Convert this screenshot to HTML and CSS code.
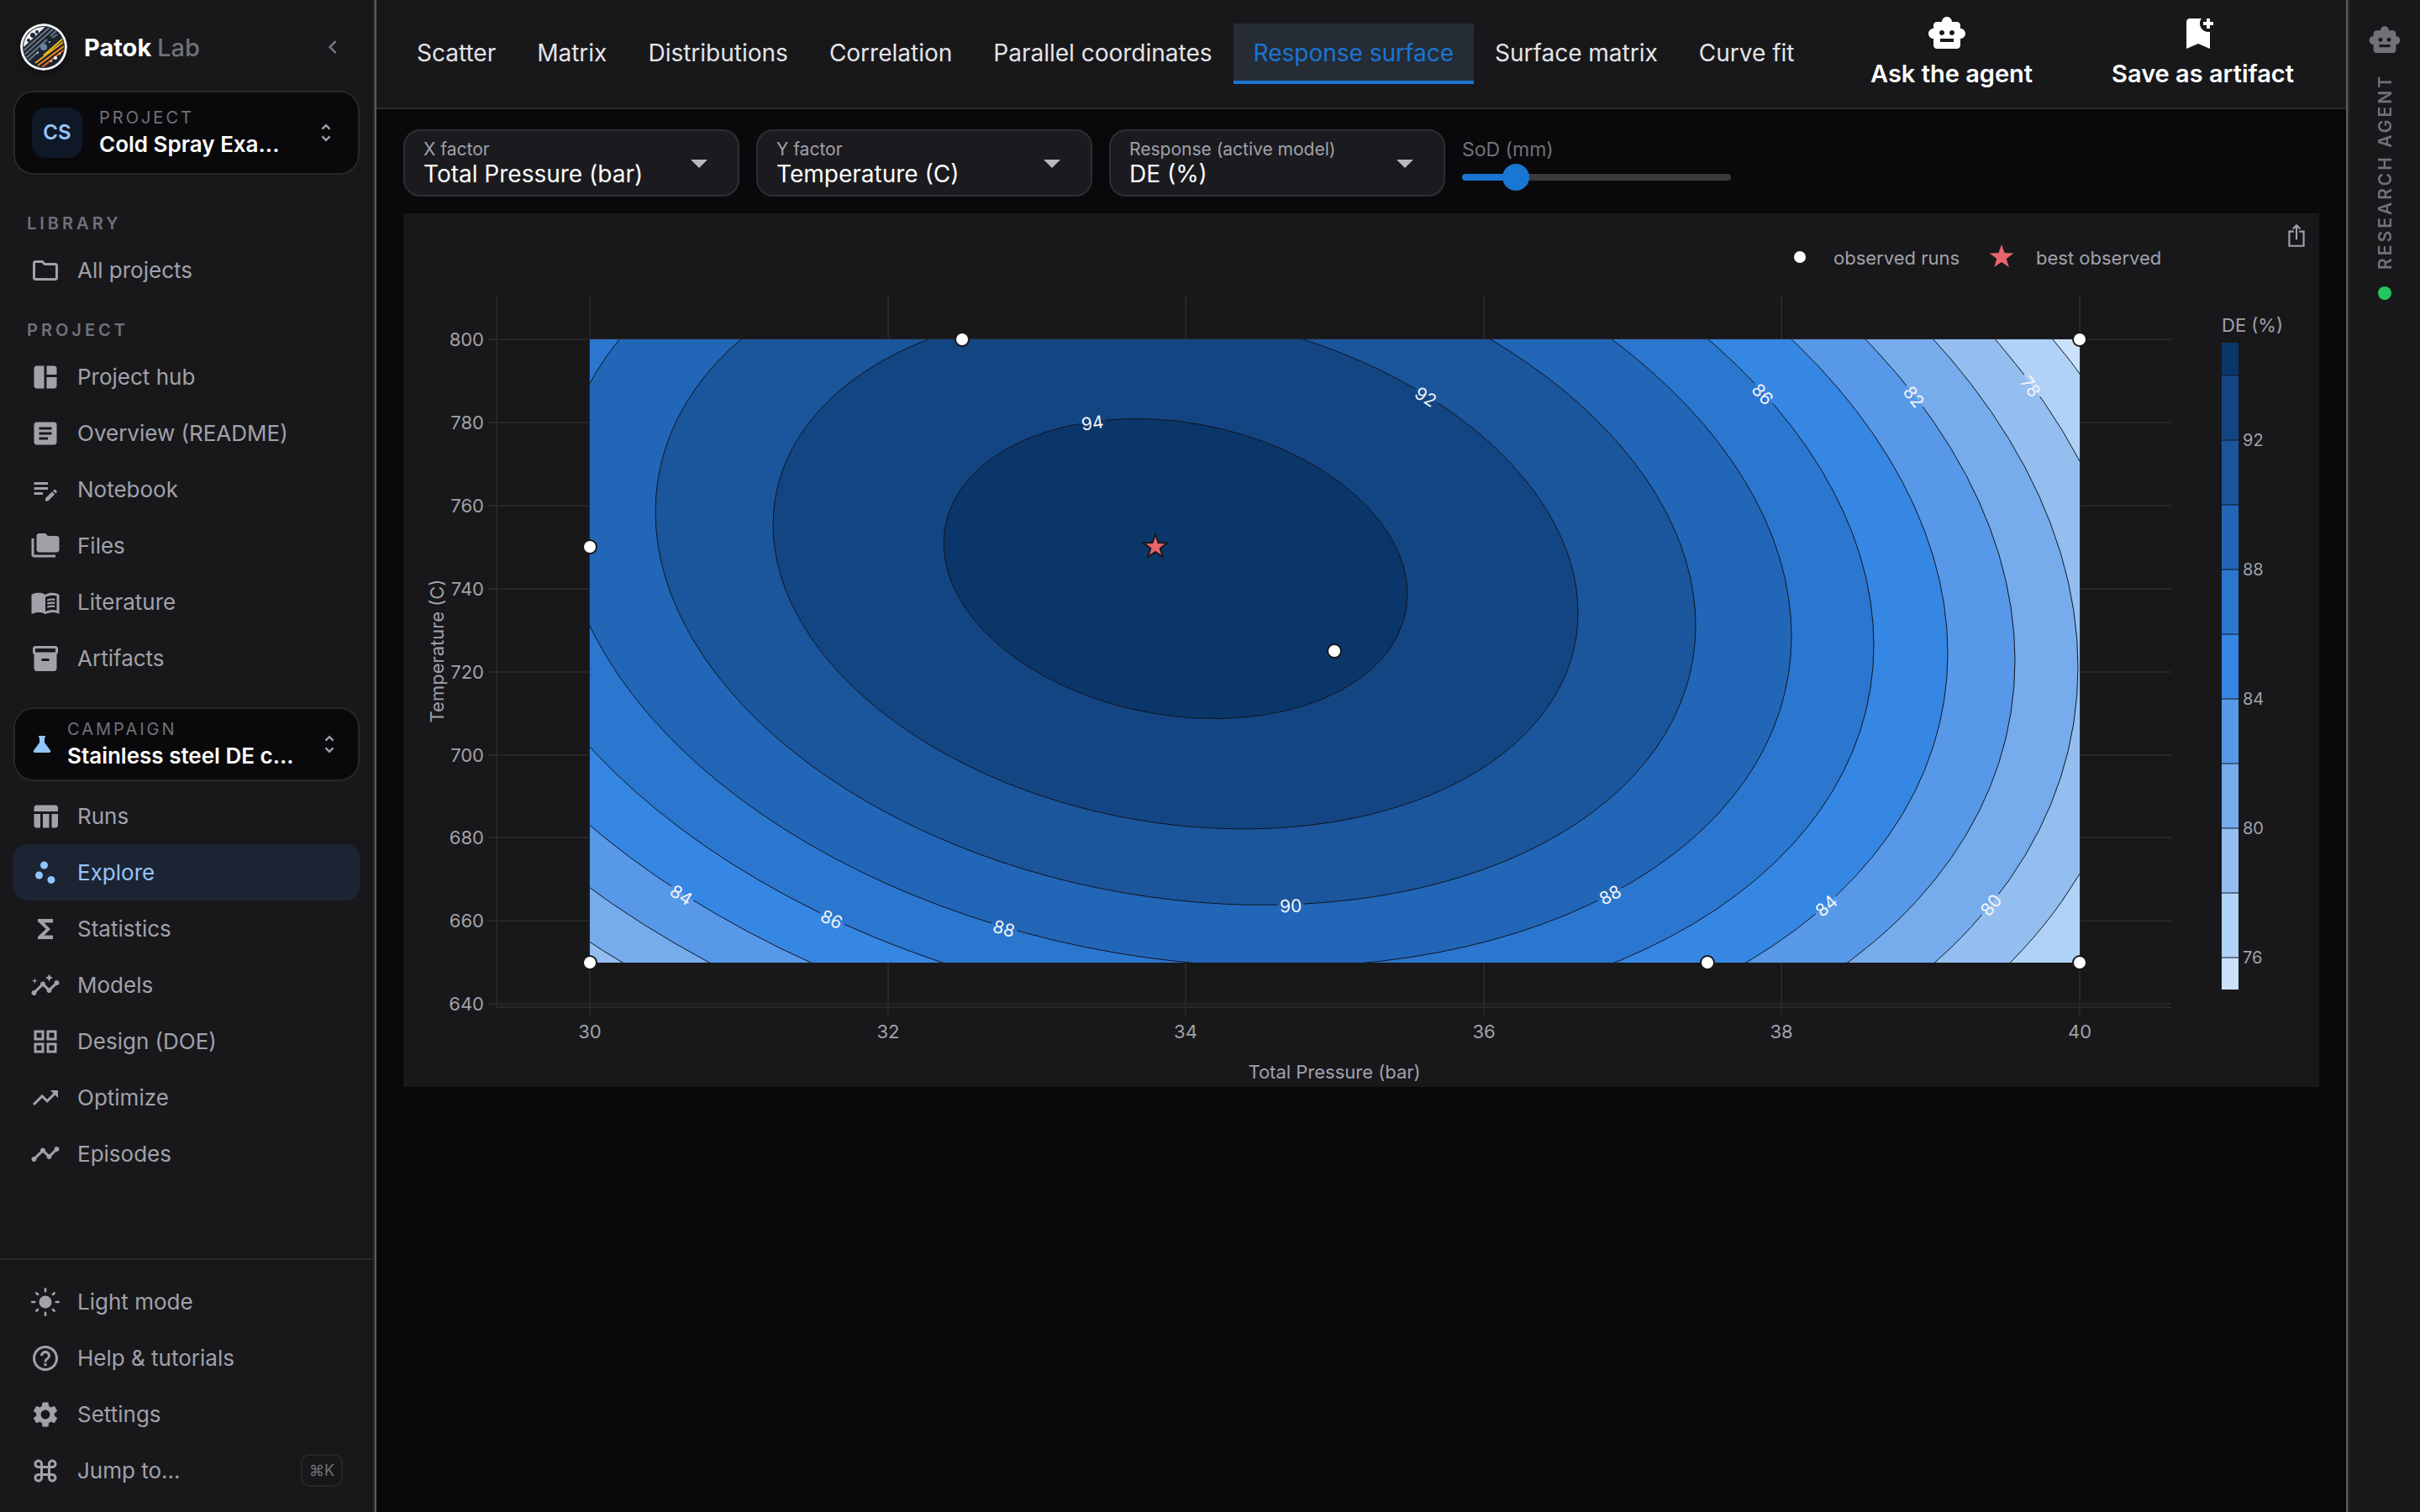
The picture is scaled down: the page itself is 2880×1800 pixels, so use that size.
FILE: index.html
```html
<!DOCTYPE html>
<html lang="en">
<head>
	<meta charset="UTF-8">
	<title>Patok Lab</title>
	<link rel="stylesheet" href="styles.css">
</head>
<body>
	<div class="app">
		<aside class="sidebar">
			<div class="brand">
				<svg class="logo" viewBox="0 0 56 56">
					<defs><clipPath id="logoClip"><circle cx="28" cy="28" r="24"/></clipPath></defs>
					<circle cx="28" cy="28" r="28" fill="#f4f4f5"/>
					<circle cx="28" cy="28" r="25" fill="#1c2430"/>
					<g clip-path="url(#logoClip)">
						<path d="M0 32 34 0H0z" fill="#f4f4f5"/>
						<circle cx="10" cy="20" r="2" fill="#1c2430"/>
						<circle cx="15" cy="14" r="3" fill="#1c2430"/>
						<circle cx="20" cy="10" r="2" fill="#1c2430"/>
						<path d="M2 34 38 2M4 38 42 4M6 42 32 19M36 15 46 6M10 44 22 33M38 17 44 13" stroke="#6b7583" stroke-width="2" fill="none"/>
						<path d="M28 38 52 17" stroke="#f2c21b" stroke-width="2"/>
						<path d="M18 47 54 20" stroke="#f5a623" stroke-width="2"/>
						<path d="M21 50 56 24" stroke="#f08a24" stroke-width="2"/>
						<path d="M26 52 54 30" stroke="#ea6a1f" stroke-width="2"/>
						<circle cx="28" cy="28" r="4" fill="#6b8299"/>
						<circle cx="35" cy="22" r="1" fill="#cfd6de"/>
						<circle cx="21" cy="35" r="1" fill="#cfd6de"/>
						<circle cx="42" cy="41" r="2" fill="#fff"/>
						<circle cx="37" cy="45" r="1" fill="#fff"/>
						<circle cx="47" cy="36" r="1" fill="#fff"/>
					</g>
				</svg>
				<span class="brand_name">Patok <span class="brand_sub">Lab</span></span>
				<button class="collapse" type="button" aria-label="Collapse sidebar">
					<svg viewBox="0 0 24 24"><path d="M15.41 7.41 14 6l-6 6 6 6 1.41-1.41L10.83 12z"/></svg>
				</button>
			</div>

			<button class="picker" type="button">
				<span class="avatar">CS</span>
				<span class="picker_text">
					<span class="picker_label">PROJECT</span>
					<span class="picker_name">Cold Spray Exa...</span>
				</span>
				<svg class="unfold" viewBox="0 0 24 24"><path d="M12 5.83 15.17 9l1.41-1.41L12 3 7.41 7.59 8.83 9 12 5.83zm0 12.34L8.83 15l-1.41 1.41L12 21l4.59-4.59L15.17 15 12 18.17z"/></svg>
			</button>

			<h2 class="section">LIBRARY</h2>
			<nav>
				<a class="item" href="#"><svg viewBox="0 0 24 24"><path d="M9.17 6l2 2H20v10H4V6h5.17M10 4H4c-1.1 0-1.99.9-1.99 2L2 18c0 1.1.9 2 2 2h16c1.1 0 2-.9 2-2V8c0-1.1-.9-2-2-2h-8l-2-2z"/></svg>All projects</a>
			</nav>

			<h2 class="section">PROJECT</h2>
			<nav>
				<a class="item" href="#"><svg viewBox="0 0 24 24"><path d="M11 21H5c-1.1 0-2-.9-2-2V5c0-1.1.9-2 2-2h6v18zm2 0h6c1.1 0 2-.9 2-2v-7h-8v9zm8-11V5c0-1.1-.9-2-2-2h-6v7h8z"/></svg>Project hub</a>
				<a class="item" href="#"><svg viewBox="0 0 24 24"><path d="M19 3H5c-1.1 0-2 .9-2 2v14c0 1.1.9 2 2 2h14c1.1 0 2-.9 2-2V5c0-1.1-.9-2-2-2zm-5 14H7v-2h7v2zm3-4H7v-2h10v2zm0-4H7V7h10v2z"/></svg>Overview (README)</a>
				<a class="item" href="#"><svg viewBox="0 0 24 24"><path d="M3 10h11v2H3v-2zm0-2h11V6H3v2zm0 8h7v-2H3v2zm15.01-3.13.71-.71c.39-.39 1.02-.39 1.41 0l.71.71c.39.39.39 1.02 0 1.41l-.71.71-2.12-2.12zm-.71.71-5.3 5.3V21h2.12l5.3-5.3-2.12-2.12z"/></svg>Notebook</a>
				<a class="item" href="#"><svg viewBox="0 0 24 24"><path d="M3 6H1v13c0 1.1.9 2 2 2h17v-2H3V6z"/><path d="M21 4h-7l-2-2H7c-1.1 0-1.99.9-1.99 2L5 15c0 1.1.9 2 2 2h14c1.1 0 2-.9 2-2V6c0-1.1-.9-2-2-2z"/></svg>Files</a>
				<a class="item" href="#"><svg viewBox="0 0 24 24"><path d="M21 5c-1.11-.35-2.33-.5-3.5-.5-1.95 0-4.05.4-5.5 1.5-1.45-1.1-3.55-1.5-5.5-1.5S2.45 4.9 1 6v14.65c0 .25.25.5.5.5.1 0 .15-.05.25-.05C3.1 20.45 5.05 20 6.5 20c1.95 0 4.05.4 5.5 1.5 1.35-.85 3.8-1.5 5.5-1.5 1.65 0 3.35.3 4.75 1.05.1.05.15.05.25.05.25 0 .5-.25.5-.5V6c-.6-.45-1.25-.75-2-1zm0 13.5c-1.1-.35-2.3-.5-3.5-.5-1.7 0-4.15.65-5.5 1.5V8c1.35-.85 3.8-1.5 5.5-1.5 1.2 0 2.4.15 3.5.5v11.5z"/><path d="M13.5 10.5c2-.8 4-1 6-.6M13.5 13.2c2-.8 4-1 6-.6M13.5 15.9c2-.8 4-1 6-.6" fill="none" stroke="currentColor" stroke-width="1.4"/></svg>Literature</a>
				<a class="item" href="#"><svg viewBox="0 0 24 24"><path d="M20 2H4c-1 0-2 .9-2 2v3.01c0 .72.43 1.34 1 1.69V20c0 1.1 1.1 2 2 2h14c.9 0 2-.9 2-2V8.7c.57-.35 1-.97 1-1.69V4c0-1.1-1-2-2-2zm-5 12H9v-2h6v2zm5-7H4V4h16v3z"/></svg>Artifacts</a>
			</nav>

			<button class="picker campaign" type="button">
				<svg class="flask" viewBox="0 0 24 24"><path d="M8 2h8v2h-1v6l7 9.5q1 2.5-2 2.5H4q-3 0-2-2.5L9 10V4H8z"/></svg>
				<span class="picker_text">
					<span class="picker_label">CAMPAIGN</span>
					<span class="picker_name">Stainless steel DE c...</span>
				</span>
				<svg class="unfold" viewBox="0 0 24 24"><path d="M12 5.83 15.17 9l1.41-1.41L12 3 7.41 7.59 8.83 9 12 5.83zm0 12.34L8.83 15l-1.41 1.41L12 21l4.59-4.59L15.17 15 12 18.17z"/></svg>
			</button>
			<nav>
				<a class="item" href="#"><svg viewBox="0 0 24 24"><path d="M10 10.02h5V21h-5zM17 21h3c1.1 0 2-.9 2-2v-9h-5v11zm3-18H5c-1.1 0-2 .9-2 2v3h19V5c0-1.1-.9-2-2-2zM3 19c0 1.1.9 2 2 2h3V10H3v9z"/></svg>Runs</a>
				<a class="item active" href="#"><svg viewBox="0 0 24 24"><circle cx="7" cy="14" r="3"/><circle cx="11" cy="6" r="3"/><circle cx="16.6" cy="17.6" r="3"/></svg>Explore</a>
				<a class="item" href="#"><svg viewBox="0 0 24 24"><path d="M18 4H6v2l6.5 6L6 18v2h12v-3h-7l5-5-5-5h7z"/></svg>Statistics</a>
				<a class="item" href="#"><svg viewBox="0 0 24 24"><path d="M21 8c-1.45 0-2.26 1.44-1.93 2.51l-3.55 3.56c-.3-.09-.74-.09-1.04 0l-2.55-2.55C12.27 10.45 11.46 9 10 9c-1.45 0-2.27 1.44-1.93 2.52l-4.56 4.55C2.44 15.74 1 16.55 1 18c0 1.1.9 2 2 2 1.45 0 2.26-1.44 1.93-2.51l4.55-4.56c.3.09.74.09 1.04 0l2.55 2.55C12.73 16.55 13.54 18 15 18c1.45 0 2.27-1.44 1.93-2.52l3.56-3.55C21.56 12.26 23 11.45 23 10c0-1.1-.9-2-2-2z"/><path d="M15 9l.94-2.07L18 6l-2.06-.93L15 3l-.92 2.07L12 6l2.08.93zM3.5 11l.5-2 2-.5L4 8l-.5-2L3 8l-2 .5L3 9z"/></svg>Models</a>
				<a class="item" href="#"><svg viewBox="0 0 24 24"><path d="M3 3v8h8V3H3zm6 6H5V5h4v4zm-6 4v8h8v-8H3zm6 6H5v-4h4v4zm4-16v8h8V3h-8zm6 6h-4V5h4v4zm-6 4v8h8v-8h-8zm6 6h-4v-4h4v4z"/></svg>Design (DOE)</a>
				<a class="item" href="#"><svg viewBox="0 0 24 24"><path d="m16 6 2.29 2.29-4.88 4.88-4-4L2 16.59 3.41 18l6-6 4 4 6.3-6.29L22 12V6z"/></svg>Optimize</a>
				<a class="item" href="#"><svg viewBox="0 0 24 24"><path d="M23 8c0 1.1-.9 2-2 2-.18 0-.35-.02-.51-.07l-3.56 3.55c.05.16.07.34.07.52 0 1.1-.9 2-2 2s-2-.9-2-2c0-.18.02-.36.07-.52l-2.55-2.55c-.16.05-.34.07-.52.07s-.36-.02-.52-.07l-4.55 4.56c.05.16.07.33.07.51 0 1.1-.9 2-2 2s-2-.9-2-2 .9-2 2-2c.18 0 .35.02.51.07l4.56-4.55C8.02 9.36 8 9.18 8 9c0-1.1.9-2 2-2s2 .9 2 2c0 .18-.02.36-.07.52l2.55 2.55c.16-.05.34-.07.52-.07s.36.02.52.07l3.55-3.56C19.02 8.35 19 8.18 19 8c0-1.1.9-2 2-2s2 .9 2 2z"/></svg>Episodes</a>
			</nav>

			<div class="side_foot">
				<a class="item" href="#"><svg viewBox="0 0 24 24"><circle cx="12" cy="12" r="5"/><path d="M12 1.500v2M12 20.500v2M1.500 12h2M20.500 12h2M4.900 4.900l1.100 1.100M18 18l1.100 1.100M4.900 19.100 6 18M18 6l1.100-1.100" stroke="currentColor" stroke-width="1.800" stroke-linecap="round"/></svg>Light mode</a>
				<a class="item" href="#"><svg viewBox="0 0 24 24"><path d="M11 18h2v-2h-2v2zm1-16C6.48 2 2 6.48 2 12s4.48 10 10 10 10-4.48 10-10S17.52 2 12 2zm0 18c-4.41 0-8-3.59-8-8s3.59-8 8-8 8 3.59 8 8-3.59 8-8 8zm0-14c-2.21 0-4 1.79-4 4h2c0-1.1.9-2 2-2s2 .9 2 2c0 2-3 1.75-3 5h2c0-2.25 3-2.5 3-5 0-2.21-1.79-4-4-4z"/></svg>Help &amp; tutorials</a>
				<a class="item" href="#"><svg viewBox="0 0 24 24"><path d="M19.14 12.94c.04-.3.06-.61.06-.94 0-.32-.02-.64-.07-.94l2.03-1.58c.18-.14.23-.41.12-.61l-1.92-3.32c-.12-.22-.37-.29-.59-.22l-2.39.96c-.5-.38-1.03-.7-1.62-.94l-.36-2.54c-.04-.24-.24-.41-.48-.41h-3.84c-.24 0-.43.17-.47.41l-.36 2.54c-.59.24-1.13.57-1.62.94l-2.39-.96c-.22-.08-.47 0-.59.22L2.74 8.87c-.12.21-.08.47.12.61l2.03 1.58c-.05.3-.09.63-.09.94s.02.64.07.94l-2.03 1.58c-.18.14-.23.41-.12.61l1.92 3.32c.12.22.37.29.59.22l2.39-.96c.5.38 1.03.7 1.62.94l.36 2.54c.05.24.24.41.48.41h3.84c.24 0 .44-.17.47-.41l.36-2.54c.59-.24 1.13-.56 1.62-.94l2.39.96c.22.08.47 0 .59-.22l1.92-3.32c.12-.22.07-.47-.12-.61l-2.01-1.58zM12 15.6c-1.98 0-3.6-1.62-3.6-3.6s1.62-3.6 3.6-3.6 3.6 1.62 3.6 3.6-1.62 3.6-3.6 3.6z"/></svg>Settings</a>
				<a class="item" href="#"><svg viewBox="0 0 24 24"><path d="M17.5 3C15.57 3 14 4.57 14 6.5V8h-4V6.5C10 4.57 8.43 3 6.5 3S3 4.57 3 6.5 4.57 10 6.5 10H8v4H6.5C4.57 14 3 15.57 3 17.5S4.57 21 6.5 21s3.5-1.57 3.5-3.5V16h4v1.5c0 1.93 1.57 3.5 3.5 3.5s3.5-1.57 3.5-3.5-1.57-3.5-3.5-3.5H16v-4h1.5c1.93 0 3.5-1.57 3.5-3.5S19.43 3 17.5 3zM16 8V6.5c0-.83.67-1.5 1.5-1.5s1.5.67 1.5 1.5S18.33 8 17.5 8H16zM6.5 8C5.67 8 5 7.33 5 6.5S5.67 5 6.5 5 8 5.67 8 6.5V8H6.5zm3.5 6v-4h4v4h-4zm7.5 5c-.83 0-1.5-.67-1.5-1.5V16h1.5c.83 0 1.5.67 1.5 1.5s-.67 1.5-1.5 1.5zm-11 0c-.83 0-1.5-.67-1.5-1.5S5.67 16 6.5 16H8v1.5c0 .83-.67 1.5-1.5 1.5z"/></svg>Jump to...<kbd>⌘K</kbd></a>
			</div>
		</aside>

		<main class="main">
			<header class="topbar">
				<nav class="tabs">
					<a class="tab" href="#">Scatter</a>
					<a class="tab" href="#">Matrix</a>
					<a class="tab" href="#">Distributions</a>
					<a class="tab" href="#">Correlation</a>
					<a class="tab" href="#">Parallel coordinates</a>
					<a class="tab current" href="#">Response surface</a>
					<a class="tab" href="#">Surface matrix</a>
					<a class="tab" href="#">Curve fit</a>
				</nav>
				<div class="actions">
					<button class="action" type="button">
						<svg viewBox="0 0 24 24"><path d="M20 9V7c0-1.1-.9-2-2-2h-3c0-1.66-1.34-3-3-3S9 3.34 9 5H6c-1.1 0-2 .9-2 2v2c-1.66 0-3 1.34-3 3s1.34 3 3 3v4c0 1.1.9 2 2 2h12c1.1 0 2-.9 2-2v-4c1.66 0 3-1.34 3-3s-1.34-3-3-3zM7.5 11.5c0-.83.67-1.5 1.5-1.5s1.5.67 1.5 1.5S9.83 13 9 13s-1.5-.67-1.5-1.5zM16 17H8v-2h8v2zm-1-4c-.83 0-1.5-.67-1.5-1.5S14.17 10 15 10s1.5.67 1.5 1.5S15.83 13 15 13z"/></svg>
						Ask the agent
					</button>
					<button class="action" type="button">
						<svg viewBox="0 0 24 24"><path d="M21 7h-2v2h-2V7h-2V5h2V3h2v2h2v2zm-2 14-7-3-7 3V5c0-1.1.9-2 2-2h7c-.63.84-1 1.87-1 3 0 2.76 2.24 5 5 5 .34 0 .68-.03 1-.1V21z"/></svg>
						Save as artifact
					</button>
				</div>
			</header>

			<div class="content">
				<div class="controls">
					<div class="field">
						<label for="xFactor">X factor</label>
						<select id="xFactor"><option>Total Pressure (bar)</option></select>
						<svg viewBox="0 0 24 24"><path d="m7 10 5 5 5-5z"/></svg>
					</div>
					<div class="field">
						<label for="yFactor">Y factor</label>
						<select id="yFactor"><option>Temperature (C)</option></select>
						<svg viewBox="0 0 24 24"><path d="m7 10 5 5 5-5z"/></svg>
					</div>
					<div class="field">
						<label for="response">Response (active model)</label>
						<select id="response"><option>DE (%)</option></select>
						<svg viewBox="0 0 24 24"><path d="m7 10 5 5 5-5z"/></svg>
					</div>
					<div class="slider">
						<label for="sod">SoD (mm)</label>
						<input id="sod" type="range" min="0" max="60" value="10">
					</div>
				</div>

				<div class="card">
					<button class="share" type="button" aria-label="Export chart">
						<svg viewBox="0 0 24 28"><path d="M9 9H4v16h16V9h-5M12 18V3M8 6l4-4 4 4"/></svg>
					</button>
					<svg class="chart" viewBox="0 0 2280 1040">
						<defs>
							<clipPath id="plotClip"><rect width="1773" height="742"/></clipPath>
							<path id="star" d="M0-15 3.5-4.9 14.3-4.6 5.7 1.9 8.8 12.1 0 6-8.8 12.1-5.7 1.900-14.3-4.6-3.5-4.9z"/>
							<!-- holes in the contour lines behind the level labels -->
							<mask id="labelMask" maskUnits="userSpaceOnUse" x="0" y="0" width="1773" height="742">
								<rect width="1773" height="742" fill="#fff"/>
								<g fill="#000">
									<circle cx="598" cy="99" r="16"/><circle cx="995" cy="68" r="16"/><circle cx="1396" cy="65" r="16"/>
									<circle cx="1576" cy="68" r="16"/><circle cx="1715" cy="56" r="16"/><circle cx="834" cy="674" r="16"/>
									<circle cx="1214" cy="661" r="16"/><circle cx="1471" cy="674" r="16"/><circle cx="1667" cy="673" r="16"/>
									<circle cx="109" cy="661" r="16"/><circle cx="288" cy="690" r="16"/><circle cx="493" cy="701" r="16"/>
								</g>
							</mask>
						</defs>

						<g class="chart_text">
							<circle cx="1662" cy="52" r="7" fill="#fff"/>
							<text x="1702" y="61">observed runs</text>
							<use href="#star" x="1902" y="52" fill="#e5656a"/>
							<text x="1943" y="61">best observed</text>
						</g>

						<g transform="translate(222 150)">
							<path class="grid" d="M-121 0H1882M-121 99H1882M-121 198H1882M-121 297H1882M-121 396H1882M-121 495H1882M-121 593H1882M-121 692H1882M-121 791H1882"/>
							<path class="grid" d="M0-52V804M355-52V804M709-52V804M1064-52V804M1418-52V804M1773-52V804"/>
							<path class="grid" d="M-111-52V795H1882"/>

							<g clip-path="url(#plotClip)">
								<rect width="1773" height="742" fill="#cbe1f9"/>
								<g transform="matrix(1 .1093 0 .6375 697 273)">
									<circle r="1208" fill="#b0d2f6"/>
									<circle r="1143" fill="#94bef0"/>
									<circle r="1074" fill="#76abec"/>
									<circle r="999" fill="#5798e8"/>
									<circle r="919" fill="#3686e4"/>
									<circle r="831" fill="#2b76cf"/>
									<circle r="733" fill="#2266b8"/>
									<circle r="619" fill="#1b559b"/>
									<circle r="479" fill="#144583"/>
									<circle r="276" fill="#0b3669"/>
								</g>
								<g mask="url(#labelMask)">
									<g class="contour" transform="matrix(1 .1093 0 .6375 697 273)">
										<circle r="1208"/>
										<circle r="1143"/>
										<circle r="1074"/>
										<circle r="999"/>
										<circle r="919"/>
										<circle r="831"/>
										<circle r="733"/>
										<circle r="619"/>
										<circle r="479"/>
										<circle r="276"/>
									</g>
								</g>
							</g>

							<g class="level">
								<text transform="translate(598 99) rotate(-8)" y="8">94</text>
								<text transform="translate(995 68) rotate(32)" y="8">92</text>
								<text transform="translate(1396 65) rotate(48)" y="8">86</text>
								<text transform="translate(1576 68) rotate(52)" y="8">82</text>
								<text transform="translate(1715 56) rotate(54)" y="8">78</text>
								<text transform="translate(834 674) rotate(-2)" y="8">90</text>
								<text transform="translate(1214 661) rotate(-28)" y="8">88</text>
								<text transform="translate(1471 674) rotate(-42)" y="8">84</text>
								<text transform="translate(1667 673) rotate(-51)" y="8">80</text>
								<text transform="translate(109 661) rotate(32)" y="8">84</text>
								<text transform="translate(288 690) rotate(25)" y="8">86</text>
								<text transform="translate(493 701) rotate(16)" y="8">88</text>
							</g>

							<g class="run">
								<circle cx="443" cy="0" r="8"/>
								<circle cx="1773" cy="0" r="8"/>
								<circle cx="0" cy="247" r="8"/>
								<circle cx="886" cy="371" r="8"/>
								<circle cx="0" cy="742" r="8"/>
								<circle cx="1330" cy="742" r="8"/>
								<circle cx="1773" cy="742" r="8"/>
							</g>
							<use class="best" href="#star" x="673" y="247"/>

							<g class="chart_text end">
								<text x="-126" y="8">800</text>
								<text x="-126" y="107">780</text>
								<text x="-126" y="206">760</text>
								<text x="-126" y="305">740</text>
								<text x="-126" y="404">720</text>
								<text x="-126" y="503">700</text>
								<text x="-126" y="601">680</text>
								<text x="-126" y="700">660</text>
								<text x="-126" y="799">640</text>
							</g>
							<g class="chart_text middle">
								<text x="0" y="832">30</text>
								<text x="355" y="832">32</text>
								<text x="709" y="832">34</text>
								<text x="1064" y="832">36</text>
								<text x="1418" y="832">38</text>
								<text x="1773" y="832">40</text>
								<text x="886" y="880">Total Pressure (bar)</text>
								<text transform="translate(-174 371) rotate(-90)">Temperature (C)</text>
							</g>
						</g>

						<g transform="translate(2164 154)">
							<text class="chart_text" x="0" y="-13">DE (%)</text>
							<rect width="20" height="39" fill="#0b3669"/>
							<rect y="39" width="20" height="77" fill="#144583"/>
							<rect y="116" width="20" height="77" fill="#1b559b"/>
							<rect y="193" width="20" height="77" fill="#2266b8"/>
							<rect y="270" width="20" height="77" fill="#2b76cf"/>
							<rect y="347" width="20" height="77" fill="#3686e4"/>
							<rect y="424" width="20" height="77" fill="#5798e8"/>
							<rect y="501" width="20" height="77" fill="#76abec"/>
							<rect y="578" width="20" height="77" fill="#94bef0"/>
							<rect y="655" width="20" height="77" fill="#b0d2f6"/>
							<rect y="732" width="20" height="38" fill="#cbe1f9"/>
							<path class="bar_lines" d="M0 39h20M0 116h20M0 193h20M0 270h20M0 347h20M0 424h20M0 501h20M0 578h20M0 655h20M0 732h20"/>
							<g class="chart_text small">
								<text x="25" y="123">92</text>
								<text x="25" y="277">88</text>
								<text x="25" y="431">84</text>
								<text x="25" y="585">80</text>
								<text x="25" y="739">76</text>
							</g>
						</g>
					</svg>
				</div>
			</div>
		</main>

		<aside class="rail">
			<svg viewBox="0 0 24 24"><path d="M20 9V7c0-1.1-.9-2-2-2h-3c0-1.66-1.34-3-3-3S9 3.34 9 5H6c-1.1 0-2 .9-2 2v2c-1.66 0-3 1.34-3 3s1.34 3 3 3v4c0 1.1.9 2 2 2h12c1.1 0 2-.9 2-2v-4c1.66 0 3-1.34 3-3s-1.34-3-3-3zM7.5 11.5c0-.83.67-1.5 1.5-1.5s1.5.67 1.5 1.5S9.83 13 9 13s-1.5-.67-1.5-1.5zM16 17H8v-2h8v2zm-1-4c-.83 0-1.5-.67-1.5-1.5S14.17 10 15 10s1.5.67 1.5 1.5S15.83 13 15 13z"/></svg>
			<span class="rail_text">RESEARCH AGENT</span>
			<span class="online"></span>
		</aside>
	</div>
</body>
</html>
```
FILE: styles.css
```css
*{margin: 0;padding: 0;box-sizing: border-box;}
body{
	font-family: Inter, "Noto Sans", sans-serif;
	font-size: 26px;
	background: #09090b;
	color: #a1a1aa;
}
svg{display: block;fill: currentColor;flex-shrink: 0;}
button{font: inherit;color: inherit;background: none;border: 0;}
a{color: inherit;text-decoration: none;}
.app{
	display: flex;
	min-height: 100vh;
}

/* sidebar */
.sidebar{
	width: 448px;
	flex-shrink: 0;
	display: flex;
	flex-direction: column;
	padding: 28px 16px 16px;
	background: #18181b;
	border-right: 2px solid #5c5c60;
	box-shadow: inset -2px 0 #2a2a2d;
}
.sidebar > *{margin-right: 2px;}
.brand{
	display: flex;
	align-items: center;
	gap: 20px;
	padding: 0 16px 0 8px;
	margin-bottom: 24px;
}
.logo{
	width: 56px;
	height: 56px;
	border-radius: 50%;
	box-shadow: 0 4px 12px rgba(0,0,0,.4);
}
.brand_name{
	flex: 1;
	font-size: 29px;
	font-weight: 700;
	color: #fff;
}
.brand_sub{font-weight: 500;color: #71717a;}
.collapse{color: #71717a;}
.collapse svg{width: 32px;height: 32px;}
.picker{
	display: flex;
	align-items: center;
	height: 100px;
	gap: 20px;
	padding: 0 24px 0 20px;
	margin-bottom: 20px;
	background: #09090b;
	border: 2px solid #27272a;
	border-radius: 24px;
	text-align: left;
}
.avatar{
	width: 60px;
	height: 60px;
	border-radius: 16px;
	background: #0f1826;
	color: #93c5fd;
	font-size: 24px;
	font-weight: 600;
	line-height: 60px;
	text-align: center;
}
.picker_text{flex: 1;display: grid;}
.picker_label{
	font-size: 20px;
	line-height: 28px;
	letter-spacing: 3px;
	color: #71717a;
}
.picker_name{
	line-height: 36px;
	font-weight: 600;
	color: #fff;
}
.unfold{width: 28px;height: 28px;}
.campaign{
	height: 88px;
	gap: 18px;
	margin-top: 25px;
	margin-bottom: 8px;
	padding: 0 20px;
}
.flask{width: 24px;height: 24px;color: #93c5fd;}
.section{
	padding: 26px 16px 10px;
	font-size: 20px;
	line-height: 24px;
	letter-spacing: 4px;
	font-weight: 600;
	color: #71717a;
}
.item{
	display: flex;
	align-items: center;
	gap: 20px;
	height: 67px;
	padding: 0 20px;
	border-radius: 16px;
}
.item > svg{width: 36px;height: 36px;}
.active{background: #1c2433;color: #93c5fd;}
.side_foot{
	margin: auto -14px 0 -16px;
	padding: 16px 16px 0;
	border-top: 2px solid #27272a;
}
kbd{
	margin-left: auto;
	padding: 0 8px;
	font: inherit;
	font-size: 18px;
	line-height: 35px;
	border: 2px solid #27272a;
	border-radius: 10px;
	color: #71717a;
}

/* top bar */
.main{flex: 1;min-width: 0;}
.topbar{
	display: flex;
	justify-content: space-between;
	align-items: center;
	height: 130px;
	padding: 0 32px 0 24px;
	background: #18181b;
	border-bottom: 2px solid #2a2a2d;
}
.tabs{display: flex;gap: 1px;}
.tab{
	padding: 2px 24px 0;
	font-size: 28px;
	line-height: 66px;
	border-bottom: 4px solid transparent;
	color: #e4e4e7;
	white-space: nowrap;
}
.current{
	color: #1976d2;
	background: #252c36;
	border-color: #1976d2;
}
.actions{display: flex;gap: 34px;}
.action{
	display: flex;
	flex-direction: column;
	align-items: center;
	gap: 8px;
	padding: 0 30px 8px;
	font-size: 29px;
	line-height: 32px;
	font-weight: 600;
	color: #fff;
	white-space: nowrap;
}
.action svg{width: 48px;height: 48px;margin-right: 12px;}

/* chart controls */
.content{padding: 24px 32px;}
.controls{
	display: flex;
	gap: 20px;
	margin-bottom: 20px;
}
.field{
	position: relative;
	width: 400px;
	height: 80px;
	padding: 9px 22px;
	background: #1b1b1f;
	border: 2px solid #2e2e32;
	border-radius: 20px;
}
.field label, .slider label{
	display: block;
	font-size: 21px;
	line-height: 26px;
}
.field select{
	display: block;
	width: 100%;
	height: 32px;
	appearance: none;
	border: 0;
	background: none;
	font: inherit;
	font-size: 28px;
	line-height: 32px;
	color: #fff;
}
.field svg{
	position: absolute;
	right: 22px;
	top: 14px;
	width: 48px;
	height: 48px;
	color: #b9b9bd;
	pointer-events: none;
}
.slider{width: 320px;padding-top: 11px;}
.slider label{font-size: 23px;color: #71717a;}
.slider input{
	display: block;
	width: 100%;
	height: 32px;
	margin-top: 4px;
	appearance: none;
	background: none;
}
.slider input::-webkit-slider-runnable-track{
	height: 8px;
	border-radius: 4px;
	background: linear-gradient(to right, #1976d2 20%, #3a3a3a 20%);
}
.slider input::-webkit-slider-thumb{
	appearance: none;
	width: 32px;
	height: 32px;
	margin-top: -12px;
	border-radius: 50%;
	background: #1976d2;
}

/* chart */
.card{position: relative;background: #18181b;}
.share{
	position: absolute;
	top: 12px;
	right: 14px;
}
.share svg{
	width: 26px;
	height: 30px;
	fill: none;
	stroke: #a1a1aa;
	stroke-width: 2;
}
.chart{width: 100%;}
.chart_text{font-size: 22px;fill: #a1a1aa;}
.small{font-size: 20px;}
.end{text-anchor: end;}
.middle{text-anchor: middle;}
.grid{fill: none;stroke: #27272a;stroke-width: 2;}
.contour circle{
	fill: none;
	stroke: #10161f;
	stroke-width: 1;
	vector-effect: non-scaling-stroke;
}
.level{font-size: 21px;fill: #f4f4f5;text-anchor: middle;}
.run{fill: #fff;stroke: #18181b;stroke-width: 2;}
.best{fill: #e5656a;stroke: #18181b;stroke-width: 2;}
.bar_lines{stroke: #10161f;stroke-width: 1;}

/* agent rail */
.rail{
	width: 88px;
	flex-shrink: 0;
	display: flex;
	flex-direction: column;
	align-items: center;
	padding: 28px 0 0 2px;
	gap: 20px;
	background: #18181b;
	border-left: 2px solid #5c5c60;
	box-shadow: inset 2px 0 #2a2a2d;
	color: #71717a;
}
.rail svg{width: 40px;height: 40px;}
.rail_text{
	writing-mode: vertical-rl;
	transform: rotate(180deg);
	font-size: 21px;
	font-weight: 600;
	letter-spacing: 3px;
}
.online{
	width: 16px;
	height: 16px;
	border-radius: 50%;
	background: #22c55e;
}
```
